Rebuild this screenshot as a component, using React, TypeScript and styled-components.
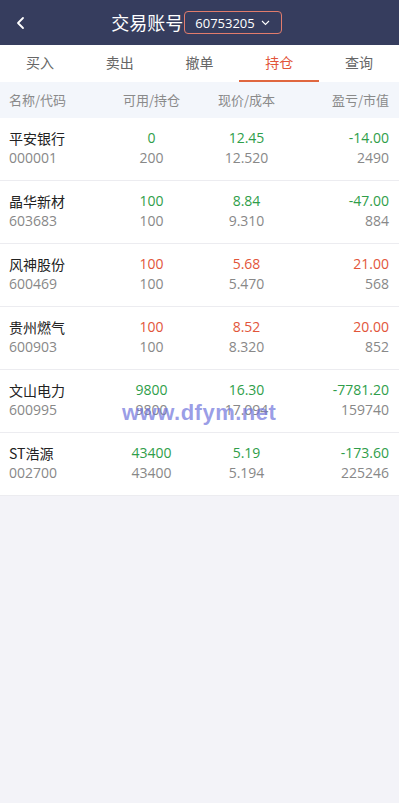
import styled, { createGlobalStyle } from "styled-components";

type Tone = "up" | "down" | "flat";

interface Holding {
    name: string;
    code: string;
    avail: string;
    hold: string;
    price: string;
    cost: string;
    profit: string;
    value: string;
    tone: Tone;
}

const holdings: Holding[] = [
    { name: "平安银行", code: "000001", avail: "0", hold: "200", price: "12.45", cost: "12.520", profit: "-14.00", value: "2490", tone: "down" },
    { name: "晶华新材", code: "603683", avail: "100", hold: "100", price: "8.84", cost: "9.310", profit: "-47.00", value: "884", tone: "down" },
    { name: "风神股份", code: "600469", avail: "100", hold: "100", price: "5.68", cost: "5.470", profit: "21.00", value: "568", tone: "up" },
    { name: "贵州燃气", code: "600903", avail: "100", hold: "100", price: "8.52", cost: "8.320", profit: "20.00", value: "852", tone: "up" },
    { name: "文山电力", code: "600995", avail: "9800", hold: "9800", price: "16.30", cost: "17.094", profit: "-7781.20", value: "159740", tone: "down" },
    { name: "ST浩源", code: "002700", avail: "43400", hold: "43400", price: "5.19", cost: "5.194", profit: "-173.60", value: "225246", tone: "down" },
];

const tabs = ["买入", "卖出", "撤单", "持仓", "查询"];

function App() {
    return (
        <Page>
            <GlobalStyle />
            <Header>
                <BackBtn>
                    <svg width="14" height="14" viewBox="0 0 14 14">
                        <path d="M9 2 L4 7 L9 12" fill="none" stroke="#fff" strokeWidth="1.8" strokeLinecap="round" strokeLinejoin="round" />
                    </svg>
                </BackBtn>
                <Title>交易账号</Title>
                <Account>
                    60753205
                    <svg width="11" height="11" viewBox="0 0 11 11">
                        <path d="M2 4 L5.5 7.5 L9 4" fill="none" stroke="#fff" strokeWidth="1.1" />
                    </svg>
                </Account>
            </Header>

            <Tabs>
                {tabs.map((t) => (
                    <Tab key={t} $active={t === "持仓"}>{t}</Tab>
                ))}
            </Tabs>

            <HeadRow>
                <HeadCell $align="left">名称/代码</HeadCell>
                <HeadCell $align="center">可用/持仓</HeadCell>
                <HeadCell $align="center">现价/成本</HeadCell>
                <HeadCell $align="right">盈亏/市值</HeadCell>
            </HeadRow>

            <List>
                {holdings.map((h) => (
                    <Row key={h.code}>
                        <Cell $align="left">
                            <Name>{h.name}</Name>
                            <Sub>{h.code}</Sub>
                        </Cell>
                        <Cell $align="center">
                            <Main $tone={h.tone}>{h.avail}</Main>
                            <Sub>{h.hold}</Sub>
                        </Cell>
                        <Cell $align="center">
                            <Main $tone={h.tone}>{h.price}</Main>
                            <Sub>{h.cost}</Sub>
                        </Cell>
                        <Cell $align="right">
                            <Main $tone={h.tone}>{h.profit}</Main>
                            <Sub>{h.value}</Sub>
                        </Cell>
                    </Row>
                ))}
                <Watermark>www.dfym.net</Watermark>
            </List>
        </Page>
    );
}

const GlobalStyle = createGlobalStyle`
    html, body {
        margin: 0;
        padding: 0;
        background: #f3f3f8;
    }
    body {
        font-family: "Noto Sans CJK SC", "Noto Sans", sans-serif;
    }
`;

const Page = styled.div`
    width: 399px;
    min-height: 803px;
    background: #f3f3f8;
`;

const Header = styled.div`
    height: 45px;
    background: #363d5e;
    display: flex;
    align-items: center;
    justify-content: center;
    position: relative;
    color: #fff;
    padding-right: 6px;
`;

const BackBtn = styled.div`
    position: absolute;
    left: 14px;
    top: 16px;
    display: flex;
`;

const Title = styled.div`
    font-size: 18px;
    line-height: 22px;
    margin-top: -2px;
`;

const Account = styled.div`
    display: flex;
    align-items: center;
    gap: 5px;
    height: 21px;
    padding: 0 10px 0 10px;
    border: 1px solid #e27c6c;
    border-radius: 4px;
    font-size: 13px;
    font-family: "Open Sans", "Noto Sans", sans-serif;
    margin-left: 1px;
`;

const Tabs = styled.div`
    display: flex;
    height: 37px;
    background: #fff;
`;

const Tab = styled.div<{ $active: boolean }>`
    flex: 1;
    display: flex;
    align-items: center;
    justify-content: center;
    font-size: 14px;
    color: ${(p) => (p.$active ? "#e2553a" : "#666")};
    border-bottom: 2px solid ${(p) => (p.$active ? "#e0673f" : "transparent")};
    box-sizing: border-box;
    padding-bottom: 2px;
`;

const HeadRow = styled.div`
    display: grid;
    grid-template-columns: repeat(4, 1fr);
    height: 36px;
    align-items: center;
    padding: 0 10px 2px 9px;
    box-sizing: border-box;
    background: #f3f6fb;
`;

const HeadCell = styled.div<{ $align: string }>`
    text-align: ${(p) => p.$align};
    font-size: 13px;
    color: #8a8a8a;
`;

const List = styled.div`
    position: relative;
    background: #fff;
`;

const Row = styled.div`
    display: grid;
    grid-template-columns: repeat(4, 1fr);
    height: 63px;
    box-sizing: border-box;
    align-items: center;
    padding: 0 10px 3px 9px;
    border-bottom: 1px solid #ececf0;
`;

const Cell = styled.div<{ $align: string }>`
    display: flex;
    flex-direction: column;
    align-items: ${(p) => (p.$align === "left" ? "flex-start" : p.$align === "right" ? "flex-end" : "center")};
    font-size: 14px;
    line-height: 20px;
    white-space: nowrap;
`;

const Name = styled.div`
    color: #222;
    font-size: 14px;
`;

const Main = styled.div<{ $tone: Tone }>`
    font-family: "Open Sans", "Noto Sans", sans-serif;
    font-size: 14px;
    color: ${(p) => (p.$tone === "up" ? "#e2553a" : p.$tone === "down" ? "#2f9e4a" : "#333")};
`;

const Sub = styled.div`
    font-family: "Open Sans", "Noto Sans", sans-serif;
    font-size: 14px;
    color: #888;
`;

const Watermark = styled.div`
    position: absolute;
    left: 122px;
    top: 282px;
    font-family: "Liberation Sans", Arial, sans-serif;
    font-weight: bold;
    font-size: 22px;
    color: rgba(110, 115, 220, 0.7);
    letter-spacing: 0.5px;
    pointer-events: none;
`;

export default App;
